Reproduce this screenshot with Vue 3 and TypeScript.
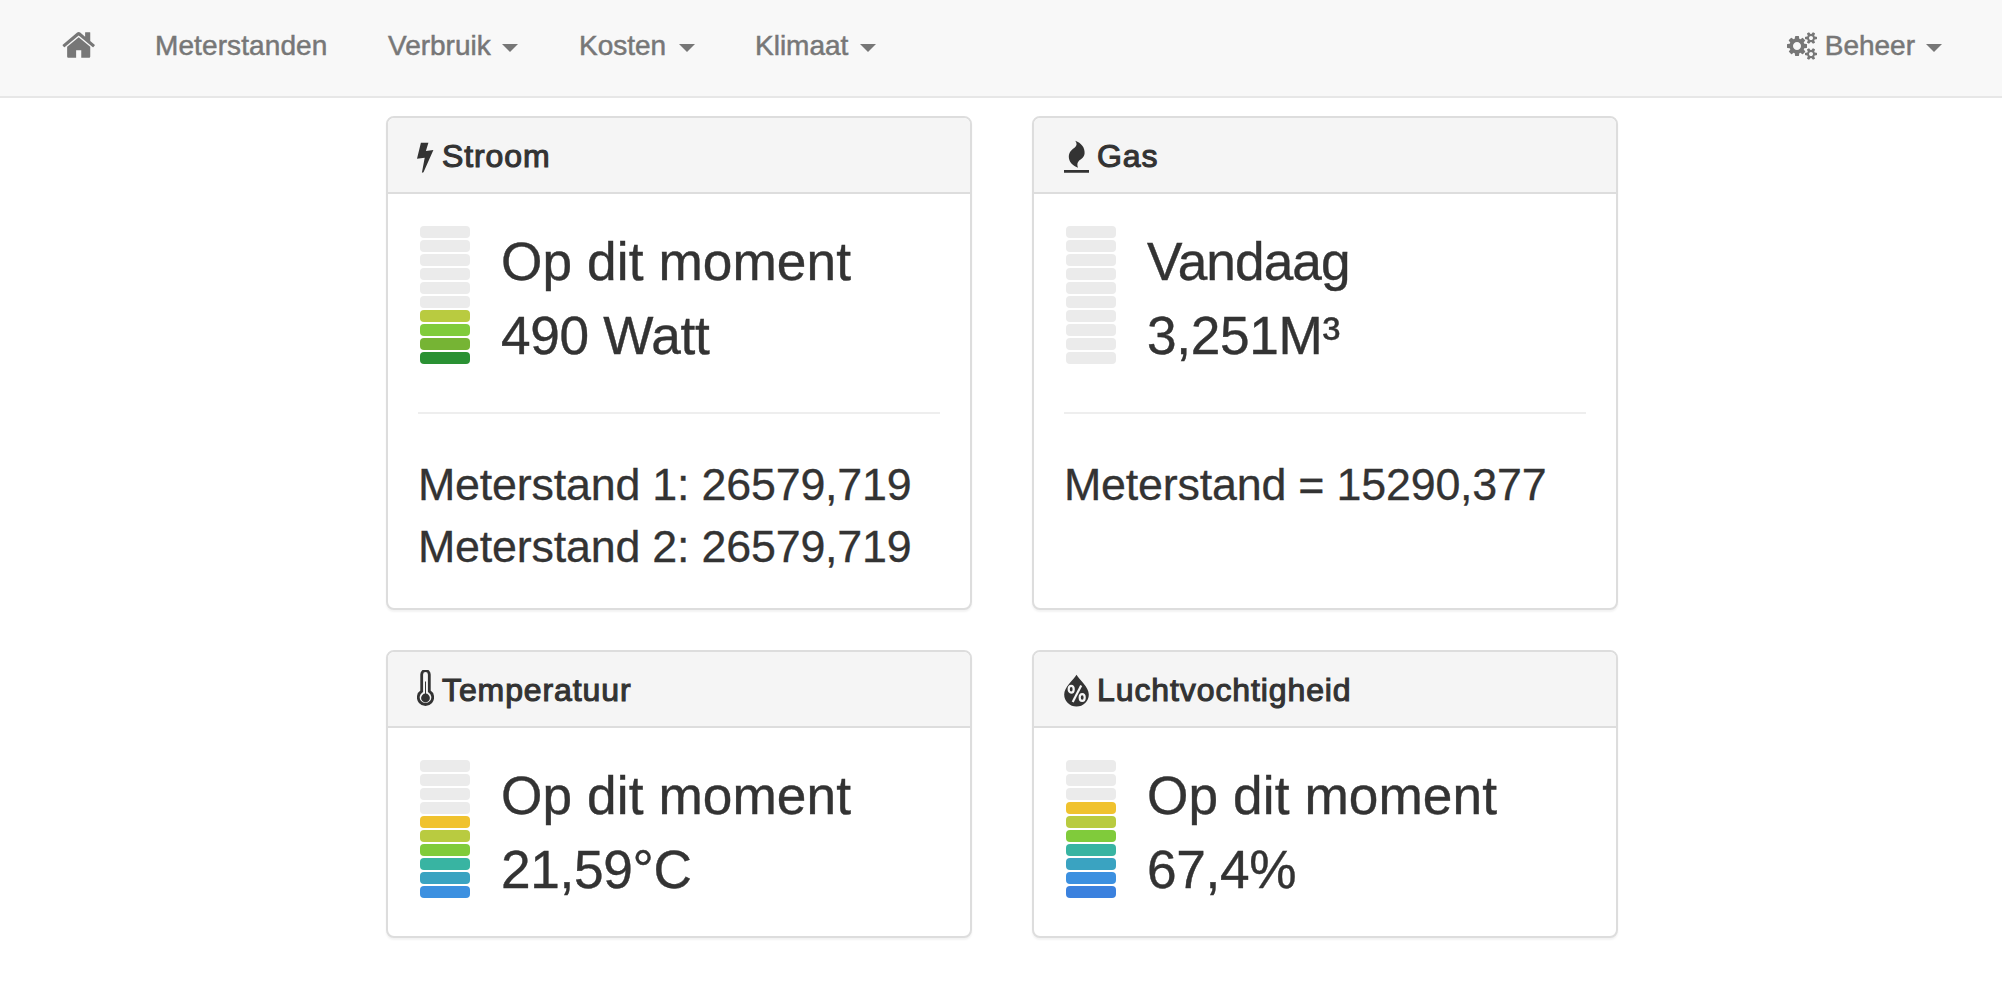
<script setup lang="ts">
type IconName = 'bolt' | 'fire' | 'thermometer' | 'humidity'

interface Panel {
  title: string
  icon: IconName
  label: string
  value: string
  bars: string[]
  meters: string[]
}

const SEGMENTS = 10
const OFF = '#ebebeb'

// Lit segments are listed from top to bottom; the rest of the gauge stays unlit.
function gauge(lit: string[]): string[] {
  return [...Array<string>(SEGMENTS - lit.length).fill(OFF), ...lit]
}

const menu = [
  { label: 'Meterstanden', cls: 'm-stand', caret: false },
  { label: 'Verbruik', cls: 'm-verbruik', caret: true },
  { label: 'Kosten', cls: 'm-kosten', caret: true },
  { label: 'Klimaat', cls: 'm-klimaat', caret: true },
]

const panels: Panel[] = [
  {
    title: 'Stroom',
    icon: 'bolt',
    label: 'Op dit moment',
    value: '490 Watt',
    bars: gauge(['#b9cb40', '#80cb3b', '#76b434', '#2a9133']),
    meters: ['Meterstand 1: 26579,719', 'Meterstand 2: 26579,719'],
  },
  {
    title: 'Gas',
    icon: 'fire',
    label: 'Vandaag',
    value: '3,251M³',
    bars: gauge([]),
    meters: ['Meterstand = 15290,377'],
  },
  {
    title: 'Temperatuur',
    icon: 'thermometer',
    label: 'Op dit moment',
    value: '21,59°C',
    bars: gauge(['#f0c22e', '#b9cb40', '#80cb3b', '#38b4a2', '#3aa3c1', '#3c90e0']),
    meters: [],
  },
  {
    title: 'Luchtvochtigheid',
    icon: 'humidity',
    label: 'Op dit moment',
    value: '67,4%',
    bars: gauge(['#f0c22e', '#b9cb40', '#80cb3b', '#38b4a2', '#3aa3c1', '#3c90e0', '#3b81de']),
    meters: [],
  },
]
</script>

<template>
  <div class="page">
    <nav class="navbar">
      <a class="link m-home">
        <svg class="home" viewBox="0 0 1664 1792">
          <path d="M1408 992v480q0 26-19 45t-45 19h-384v-384h-256v384h-384q-26 0-45-19t-19-45v-480q0-1 .5-3t.5-3l575-474 575 474q1 2 1 6zm223-69l-62 74q-8 9-21 11h-3q-13 0-21-7l-692-577-692 577q-12 8-24 7-13-2-21-11l-62-74q-8-10-7-23.5t11-21.5l719-599q32-26 76-26t76 26l244 204v-195q0-14 9-23t23-9h192q14 0 23 9t9 23v408l219 182q10 8 11 21.5t-7 23.5z" />
        </svg>
      </a>
      <a v-for="item in menu" :key="item.label" class="link" :class="item.cls">
        <span>{{ item.label }}</span><i v-if="item.caret" class="caret"></i>
      </a>
      <a class="link m-beheer">
        <svg class="cogs" viewBox="0 0 1920 1792">
          <path d="M896 896q0-106-75-181t-181-75-181 75-75 181 75 181 181 75 181-75 75-181zm768 512q0-52-38-90t-90-38-90 38-38 90q0 53 37.5 90.5t90.5 37.5 90.5-37.5 37.5-90.5zm0-1024q0-52-38-90t-90-38-90 38-38 90q0 53 37.5 90.5t90.5 37.5 90.5-37.5 37.5-90.5zm-384 421v185q0 10-7 19.5t-16 10.5l-155 24q-11 35-32 76 34 48 90 115 7 11 7 20 0 12-7 19-23 30-82.5 89.5t-78.5 59.5q-11 0-21-7l-115-90q-37 19-77 31-11 108-23 155-7 24-30 24h-186q-11 0-20-7.5t-10-17.5l-23-153q-34-10-75-31l-118 89q-7 7-20 7-11 0-21-8-144-133-144-160 0-9 7-19 10-14 41-53t47-61q-23-44-35-82l-152-24q-10-1-17-9.5t-7-19.5v-185q0-10 7-19.5t16-10.5l155-24q11-35 32-76-34-48-90-115-7-11-7-20 0-12 7-20 22-30 82-89t79-59q11 0 21 7l115 90q34-18 77-32 11-108 23-154 7-24 30-24h186q11 0 20 7.5t10 17.5l23 153q34 10 75 31l118-89q8-7 20-7 11 0 21 8 144 133 144 160 0 8-7 19-12 16-42 54t-45 60q23 48 34 82l152 23q10 2 17 10.5t7 19.5zm640 533v140q0 16-149 31-12 27-30 52 51 113 51 138 0 4-4 7-122 71-124 71-8 0-46-47t-52-68q-20 2-30 2t-30-2q-14 21-52 68t-46 47q-2 0-124-71-4-3-4-7 0-25 51-138-18-25-30-52-149-15-149-31v-140q0-16 149-31 13-29 30-52-51-113-51-138 0-4 4-7 4-2 35-20t59-34 30-16q8 0 46 46.5t52 67.5q20-2 30-2t30 2q51-71 92-112l6-2q4 0 124 70 4 3 4 7 0 25-51 138 17 23 30 52 149 15 149 31zm0-1024v140q0 16-149 31-12 27-30 52 51 113 51 138 0 4-4 7-122 71-124 71-8 0-46-47t-52-68q-20 2-30 2t-30-2q-14 21-52 68t-46 47q-2 0-124-71-4-3-4-7 0-25 51-138-18-25-30-52-149-15-149-31v-140q0-16 149-31 13-29 30-52-51-113-51-138 0-4 4-7 4-2 35-20t59-34 30-16q8 0 46 46.5t52 67.5q20-2 30-2t30 2q51-71 92-112l6-2q4 0 124 70 4 3 4 7 0 25-51 138 17 23 30 52 149 15 149 31z" />
        </svg>
        <span>Beheer</span><i class="caret"></i>
      </a>
    </nav>

    <main class="grid">
      <section v-for="panel in panels" :key="panel.title" class="panel">
        <header class="heading">
          <svg v-if="panel.icon === 'bolt'" class="icon narrow" viewBox="0 0 17 40">
            <path d="M3.900 6.700H11.400L8.900 15L16.400 14L6.500 36.300L4.900 36.700L7.700 21.700L0 22.800Z" />
          </svg>
          <svg v-else-if="panel.icon === 'fire'" class="icon wide" viewBox="0 0 25 40">
            <path d="M11.300 4.700C17.200 7 21 11.200 20.600 17.300C20.300 21.500 17 23 15 24.800C13.200 26.600 12.900 29 14 31.700C8.300 29.700 4.700 25.700 4.800 20.600C4.900 15.500 8.200 13.500 10.800 11.400C12.900 9.600 13.300 7.400 11.300 4.700ZM0 34H25V36.700H0Z" />
          </svg>
          <svg v-else-if="panel.icon === 'thermometer'" class="icon narrow" viewBox="0 0 17 40">
            <path class="line" d="M4.700 21.200V4.400A3.800 3.800 0 0 1 12.300 4.400V21.200A7.200 7.200 0 1 1 4.700 21.200Z" />
            <path d="M8 11.500H9V24H8Z" />
            <circle cx="8.500" cy="28" r="4.400" />
          </svg>
          <svg v-else class="icon wide" viewBox="0 0 25 40">
            <path d="M12.500 4.800C15.500 10 24.800 17 24.800 24.500A12.300 12.100 0 0 1 .2 24.500C.2 17 9.500 10 12.500 4.800Z" />
            <g class="cut">
              <ellipse cx="7.200" cy="19.200" rx="2.500" ry="3.400" />
              <ellipse cx="18.200" cy="27.500" rx="2.500" ry="3.400" />
              <path d="M17.200 15.500L8.700 32" />
            </g>
          </svg>
          <h3>{{ panel.title }}</h3>
        </header>
        <div class="body">
          <div class="now">
            <div class="gauge">
              <i v-for="(color, i) in panel.bars" :key="i" :style="{ backgroundColor: color }"></i>
            </div>
            <div class="reading">
              <div class="label" :class="{ tight: panel.label === 'Vandaag' }">{{ panel.label }}</div>
              <div class="value">{{ panel.value }}</div>
            </div>
          </div>
          <div v-if="panel.meters.length" class="meters">
            <div v-for="line in panel.meters" :key="line">{{ line }}</div>
          </div>
        </div>
      </section>
    </main>
  </div>
</template>

<style>
body {
  margin: 0;
  background: #fff;
}
</style>

<style scoped>
.page {
  min-height: 998px;
  box-sizing: border-box;
  font-family: "Liberation Sans", Arial, sans-serif;
  color: #333;
}

.navbar {
  display: flex;
  align-items: flex-start;
  box-sizing: border-box;
  height: 98px;
  padding: 0 60px 0 62px;
  background: #f8f8f8;
  border-bottom: 2px solid #e7e7e7;
  color: #777;
  font-size: 28px;
  line-height: 32px;
  -webkit-text-stroke: 0.5px #777;
}

.link {
  display: flex;
  height: 32px;
  margin-top: 30px;
  white-space: nowrap;
}

.link svg {
  display: block;
  flex: none;
  fill: currentColor;
}

.m-home { width: 93px; }
.m-stand { width: 233px; letter-spacing: 0.1px; }
.m-verbruik { width: 191px; }
.m-kosten { width: 176px; }
.m-klimaat { width: 121px; }
.m-beheer { margin-left: auto; }

.home {
  width: 33.4px;
  height: 36px;
  margin-top: -3px;
}

.cogs {
  width: 30px;
  height: 28px;
  margin: 2px 8px 0 0;
}

.caret {
  width: 0;
  height: 0;
  margin: 14px 0 0 auto;
  border: 8px solid transparent;
  border-top-color: #777;
  border-bottom: 0;
}

.m-verbruik .caret { margin-right: 61px; }
.m-kosten .caret { margin-right: 60px; }
.m-beheer .caret { margin-left: 11px; }

.grid {
  display: grid;
  grid-template-columns: 586px 586px;
  grid-template-rows: 494px 288px;
  gap: 40px 60px;
  justify-content: center;
  padding: 18px 0 0 2px;
}

.panel {
  box-sizing: border-box;
  border: 2px solid #ddd;
  border-radius: 8px;
  background: #fff;
  box-shadow: 0 2px 2px rgba(0, 0, 0, 0.05);
}

.heading {
  display: flex;
  align-items: flex-start;
  box-sizing: border-box;
  height: 76px;
  padding: 18px 30px 0 29px;
  background: #f5f5f5;
  border-bottom: 2px solid #ddd;
  border-radius: 6px 6px 0 0;
}

.icon {
  display: block;
  height: 40px;
  fill: #333;
}

.narrow {
  width: 17px;
  margin-right: 8px;
}

.wide {
  width: 25px;
  margin: 0 8px 0 1px;
}

.line {
  fill: none;
  stroke: #333;
  stroke-width: 2.8;
}

.cut {
  fill: none;
  stroke: #f5f5f5;
  stroke-width: 2.2;
}

h3 {
  margin: 2px 0 0;
  font-size: 32px;
  font-weight: 400;
  line-height: 36px;
  letter-spacing: 0.9px;
  -webkit-text-stroke: 1.1px #333;
}

.body {
  padding: 32px 30px 0;
}

.now {
  display: flex;
  height: 138px;
  padding-left: 2px;
}

.gauge {
  display: flex;
  flex-direction: column;
  gap: 2px;
  width: 50px;
}

.gauge i {
  height: 12px;
  border-radius: 4px;
}

.reading {
  margin: -1px 0 0 31px;
  font-size: 53.2px;
  line-height: 74px;
  white-space: nowrap;
  -webkit-text-stroke: 0.4px #333;
}

.label { letter-spacing: 0.1px; }
.label.tight { letter-spacing: -0.9px; }
.value { letter-spacing: -0.3px; }

.meters {
  margin-top: 48px;
  padding-top: 39px;
  border-top: 2px solid #eee;
  font-size: 44.8px;
  line-height: 62px;
  letter-spacing: -0.2px;
  white-space: nowrap;
  -webkit-text-stroke: 0.3px #333;
}
</style>
